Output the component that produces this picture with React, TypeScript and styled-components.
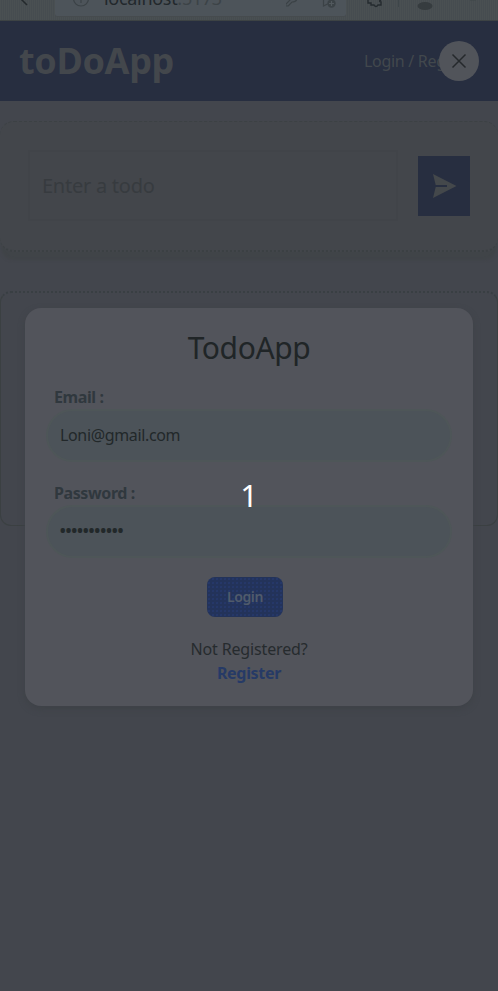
import React from "react";
import styled, { createGlobalStyle } from "styled-components";

const GlobalStyle = createGlobalStyle`
  * { box-sizing: border-box; }
  html, body { margin: 0; padding: 0; background: #43464d; overflow: hidden; }
  body, input, button { font-family: "Noto Sans", sans-serif; }
`;

const Screen = styled.div`
  position: relative;
  width: 498px;
  height: 991px;
  overflow: hidden;
  background: #43464d;
`;

const BrowserBar = styled.div`
  display: flex;
  align-items: flex-start;
  height: 21px;
  overflow: hidden;
  background: repeating-linear-gradient(90deg, #4a5052 0 1px, #464c50 1px 2px);
  border-bottom: 1px solid #3d4344;
  color: #363c3e;
`;

const BackIcon = styled.svg`
  width: 12px;
  height: 20px;
  margin: -11px 26px 0 17px;
  flex: none;
`;

const AddressBar = styled.div`
  display: flex;
  width: 291px;
  height: 17px;
  overflow: hidden;
  border-bottom: 1px solid #464b4e;
  border-radius: 0 0 3px 3px;
  background: #4d545a;
`;

const InfoIcon = styled.svg`
  width: 18px;
  height: 18px;
  margin: -11px 14px 0 17px;
  flex: none;
`;

const Address = styled.span`
  width: 182px;
  margin-top: -14px;
  font-size: 18px;
  line-height: 24px;
  letter-spacing: -0.3px;
  color: #22282c;
`;

const Port = styled.span`
  color: #3c4347;
`;

const AddressIcon = styled.svg`
  width: 58px;
  height: 12px;
  flex: none;
  margin-top: -1px;
`;

const BarIcons = styled.svg`
  width: 130px;
  height: 14px;
  margin-left: 16px;
  flex: none;
`;

const Header = styled.header`
  display: flex;
  align-items: center;
  justify-content: space-between;
  height: 80px;
  padding: 0 0 0 19px;
  background: #272e40;
`;

const Brand = styled.h1`
  margin: 0;
  font-size: 36px;
  line-height: 44px;
  letter-spacing: -0.35px;
  color: #43474c;
`;

const Account = styled.div`
  display: flex;
  align-items: center;
  width: 134px;
`;

const AccountLinks = styled.span`
  width: 80px;
  overflow: hidden;
  white-space: nowrap;
  font-size: 16px;
  line-height: 24px;
  letter-spacing: -0.3px;
  color: #42484d;
`;

const CloseButton = styled.button`
  display: flex;
  align-items: center;
  justify-content: center;
  flex: none;
  width: 40px;
  height: 40px;
  margin-left: -5px;
  padding: 0;
  border: 0;
  border-radius: 50%;
  background: #51545a;
  color: #25292c;
  z-index: 1;
`;

const EntryCard = styled.section`
  display: flex;
  align-items: center;
  justify-content: space-between;
  height: 131px;
  margin-top: 20px;
  padding: 0 28px;
  border-top: 1px dashed #3c4144;
  border-bottom: 2px dotted #3b4043;
  border-radius: 14px;
  background: #43464b;
  box-shadow: 0 9px 3px -1px #404448;
`;

const TodoInput = styled.input`
  width: 370px;
  height: 71px;
  margin-bottom: 1px;
  padding: 0 12px;
  border: 2px solid #414449;
  border-radius: 0;
  outline: 0;
  background: transparent;
  font-size: 20px;
  letter-spacing: -0.25px;
  &::placeholder { color: #373b3f; opacity: 1; }
`;

const SendButton = styled.button`
  width: 52px;
  height: 60px;
  padding: 0;
  border: 0;
  background: #272e40;
`;

const TodoList = styled.section`
  height: 235px;
  margin-top: 39px;
  border: 1px solid #3b4042;
  border-top: 2px dotted #393f43;
  border-radius: 11px;
`;

const Overlay = styled.div`
  position: absolute;
  left: 25px;
  top: 308px;
`;

const Dialog = styled.form`
  display: flex;
  flex-direction: column;
  align-items: center;
  width: 448px;
  height: 398px;
  padding-top: 16px;
  border-radius: 16px;
  background: #52545b;
  box-shadow: 0 3px 6px #3e4247;
`;

const Title = styled.h2`
  margin: 0 0 13px;
  font-size: 30px;
  line-height: 48px;
  font-weight: 400;
  letter-spacing: -0.4px;
  color: #202527;
`;

const Field = styled.label`
  display: flex;
  flex-direction: column;
  width: 406px;
  height: 96px;
`;

const FieldLabel = styled.span`
  padding-left: 8px;
  font-size: 16px;
  line-height: 24px;
  font-weight: 700;
  letter-spacing: -0.4px;
  color: #30383e;
`;

const FieldInput = styled.input<{ $masked?: boolean }>`
  width: 406px;
  height: 53px;
  padding: ${(p) => (p.$masked ? "0 11px 3px" : "0 12px 2px")};
  border: 2px solid #4e5658;
  border-radius: 27px;
  outline: 0;
  background: #4c5359;
  font-size: ${(p) => (p.$masked ? "20px" : "16px")};
  letter-spacing: ${(p) => (p.$masked ? "-1.75px" : "-0.35px")};
  color: #22282a;
`;

const LoginButton = styled.button`
  flex: none;
  width: 76px;
  height: 40px;
  margin: 0 8px 20px 0;
  padding: 0 0 2px;
  border: 0;
  border-radius: 8px;
  background-color: #23335a;
  background-image: radial-gradient(circle, #253869 0.7px, transparent 1px);
  background-size: 4px 4px;
  color: #505b6b;
  font-size: 14px;
  font-weight: 600;
  letter-spacing: -0.4px;
`;

const Prompt = styled.span`
  font-size: 16px;
  line-height: 24px;
  letter-spacing: -0.15px;
  color: #262b2e;
`;

const Register = styled.a`
  font-size: 16px;
  line-height: 24px;
  font-weight: 700;
  letter-spacing: -0.3px;
  color: #263a66;
`;

const Counter = styled.span`
  position: absolute;
  left: 0;
  top: 475px;
  width: 498px;
  text-align: center;
  font-size: 31px;
  line-height: 40px;
  color: #fff;
`;

export default function App() {
  return (
    <Screen>
      <GlobalStyle />
      <BrowserBar>
        <BackIcon viewBox="0 0 12 20" fill="none" stroke="#24292c" strokeWidth="1.5">
          <path d="M10 2 3 9l7 7" />
        </BackIcon>
        <AddressBar>
          <InfoIcon viewBox="0 0 18 18" fill="none" stroke="#3b4246" strokeWidth="1.2">
            <circle cx="9" cy="9.5" r="7.5" />
            <path d="M9 7v7" />
          </InfoIcon>
          <Address>localhost<Port>:5173</Port></Address>
          <AddressIcon viewBox="0 0 58 12" fill="none" stroke="#3b4246" strokeWidth="1.2">
            <path d="M5 0 0 5q-1 2 1 2t2-1l3-3q4 0 5-3" />
            <path d="M37.5 0v7l4-2" />
            <circle cx="45.5" cy="4.5" r="4.2" fill="#3b4246" stroke="none" />
            <path d="M43 4.5h5M45.5 2v5" stroke="#52595e" />
          </AddressIcon>
        </AddressBar>
        <BarIcons viewBox="0 0 130 14">
          <path d="M6 0v3h3v2h3q2 3 4 0h3V2q-3-1 0-2" fill="none" stroke="#252b2f" strokeWidth="1.4" />
          <path d="M36.5 0v7" stroke="#3e4649" />
          <ellipse cx="63" cy="6" rx="7.5" ry="4" fill="#363c3f" />
          <path d="M108 0h6" stroke="#3e4649" />
        </BarIcons>
      </BrowserBar>
      <Header>
        <Brand>toDoApp</Brand>
        <Account>
          <AccountLinks>Login / Register</AccountLinks>
          <CloseButton type="button" aria-label="Close">
            <svg width="16" height="16" viewBox="0 0 16 16" fill="none" stroke="currentColor" strokeWidth="1.5">
              <path d="M1.5 1.5l13 13m0-13l-13 13" />
            </svg>
          </CloseButton>
        </Account>
      </Header>
      <EntryCard>
        <TodoInput placeholder="Enter a todo" />
        <SendButton type="button" aria-label="Send">
          <svg width="52" height="60" viewBox="0 0 52 60" fill="#44484b">
            <path d="M15 18 38.5 30 15 42l2.7-11H29v-2H17.7z" />
          </svg>
        </SendButton>
      </EntryCard>
      <TodoList />
      <Overlay>
        <Dialog>
          <Title>TodoApp</Title>
          <Field>
            <FieldLabel>Email :</FieldLabel>
            <FieldInput type="email" defaultValue="Loni@gmail.com" />
          </Field>
          <Field>
            <FieldLabel>Password :</FieldLabel>
            <FieldInput $masked defaultValue="•••••••••••" />
          </Field>
          <LoginButton type="button">Login</LoginButton>
          <Prompt>Not Registered?</Prompt>
          <Register>Register</Register>
        </Dialog>
      </Overlay>
      <Counter>1</Counter>
    </Screen>
  );
}
